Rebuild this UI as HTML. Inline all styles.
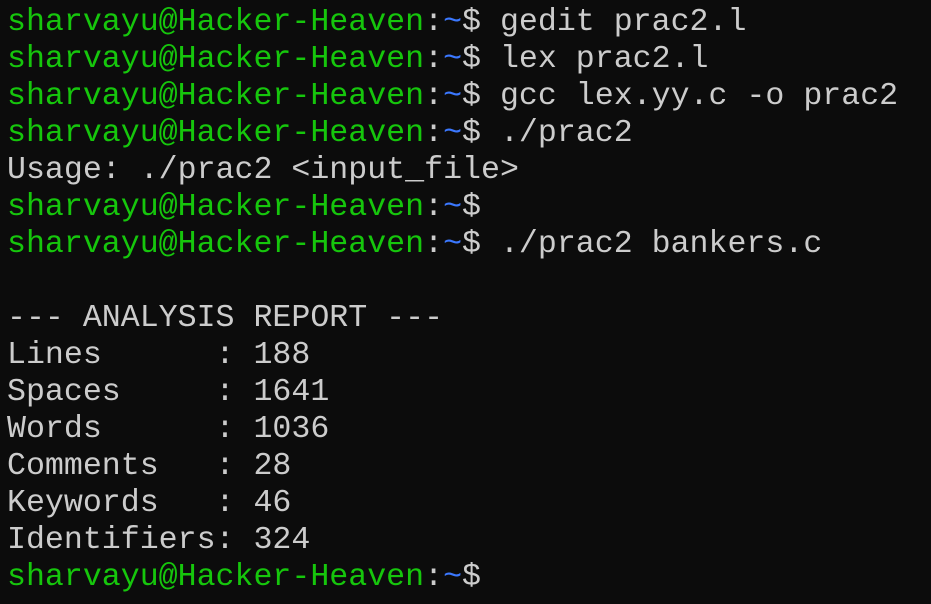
<html><head><style>
body{margin:0;background:#0c0c0c;width:931px;height:604px;overflow:hidden}
pre{margin:0;position:absolute;left:7px;top:4px;font-family:"Liberation Mono","DejaVu Sans Mono",monospace;font-size:31.6px;line-height:37px;color:#cccccc;letter-spacing:0}
.g{color:#16c60c}.b{color:#3b78ff}
</style></head><body><pre><span class="g">sharvayu@Hacker-Heaven</span>:<span class="b">~</span>$ gedit prac2.l
<span class="g">sharvayu@Hacker-Heaven</span>:<span class="b">~</span>$ lex prac2.l
<span class="g">sharvayu@Hacker-Heaven</span>:<span class="b">~</span>$ gcc lex.yy.c -o prac2
<span class="g">sharvayu@Hacker-Heaven</span>:<span class="b">~</span>$ ./prac2
Usage: ./prac2 &lt;input_file&gt;
<span class="g">sharvayu@Hacker-Heaven</span>:<span class="b">~</span>$
<span class="g">sharvayu@Hacker-Heaven</span>:<span class="b">~</span>$ ./prac2 bankers.c

--- ANALYSIS REPORT ---
Lines      : 188
Spaces     : 1641
Words      : 1036
Comments   : 28
Keywords   : 46
Identifiers: 324
<span class="g">sharvayu@Hacker-Heaven</span>:<span class="b">~</span>$</pre></body></html>
